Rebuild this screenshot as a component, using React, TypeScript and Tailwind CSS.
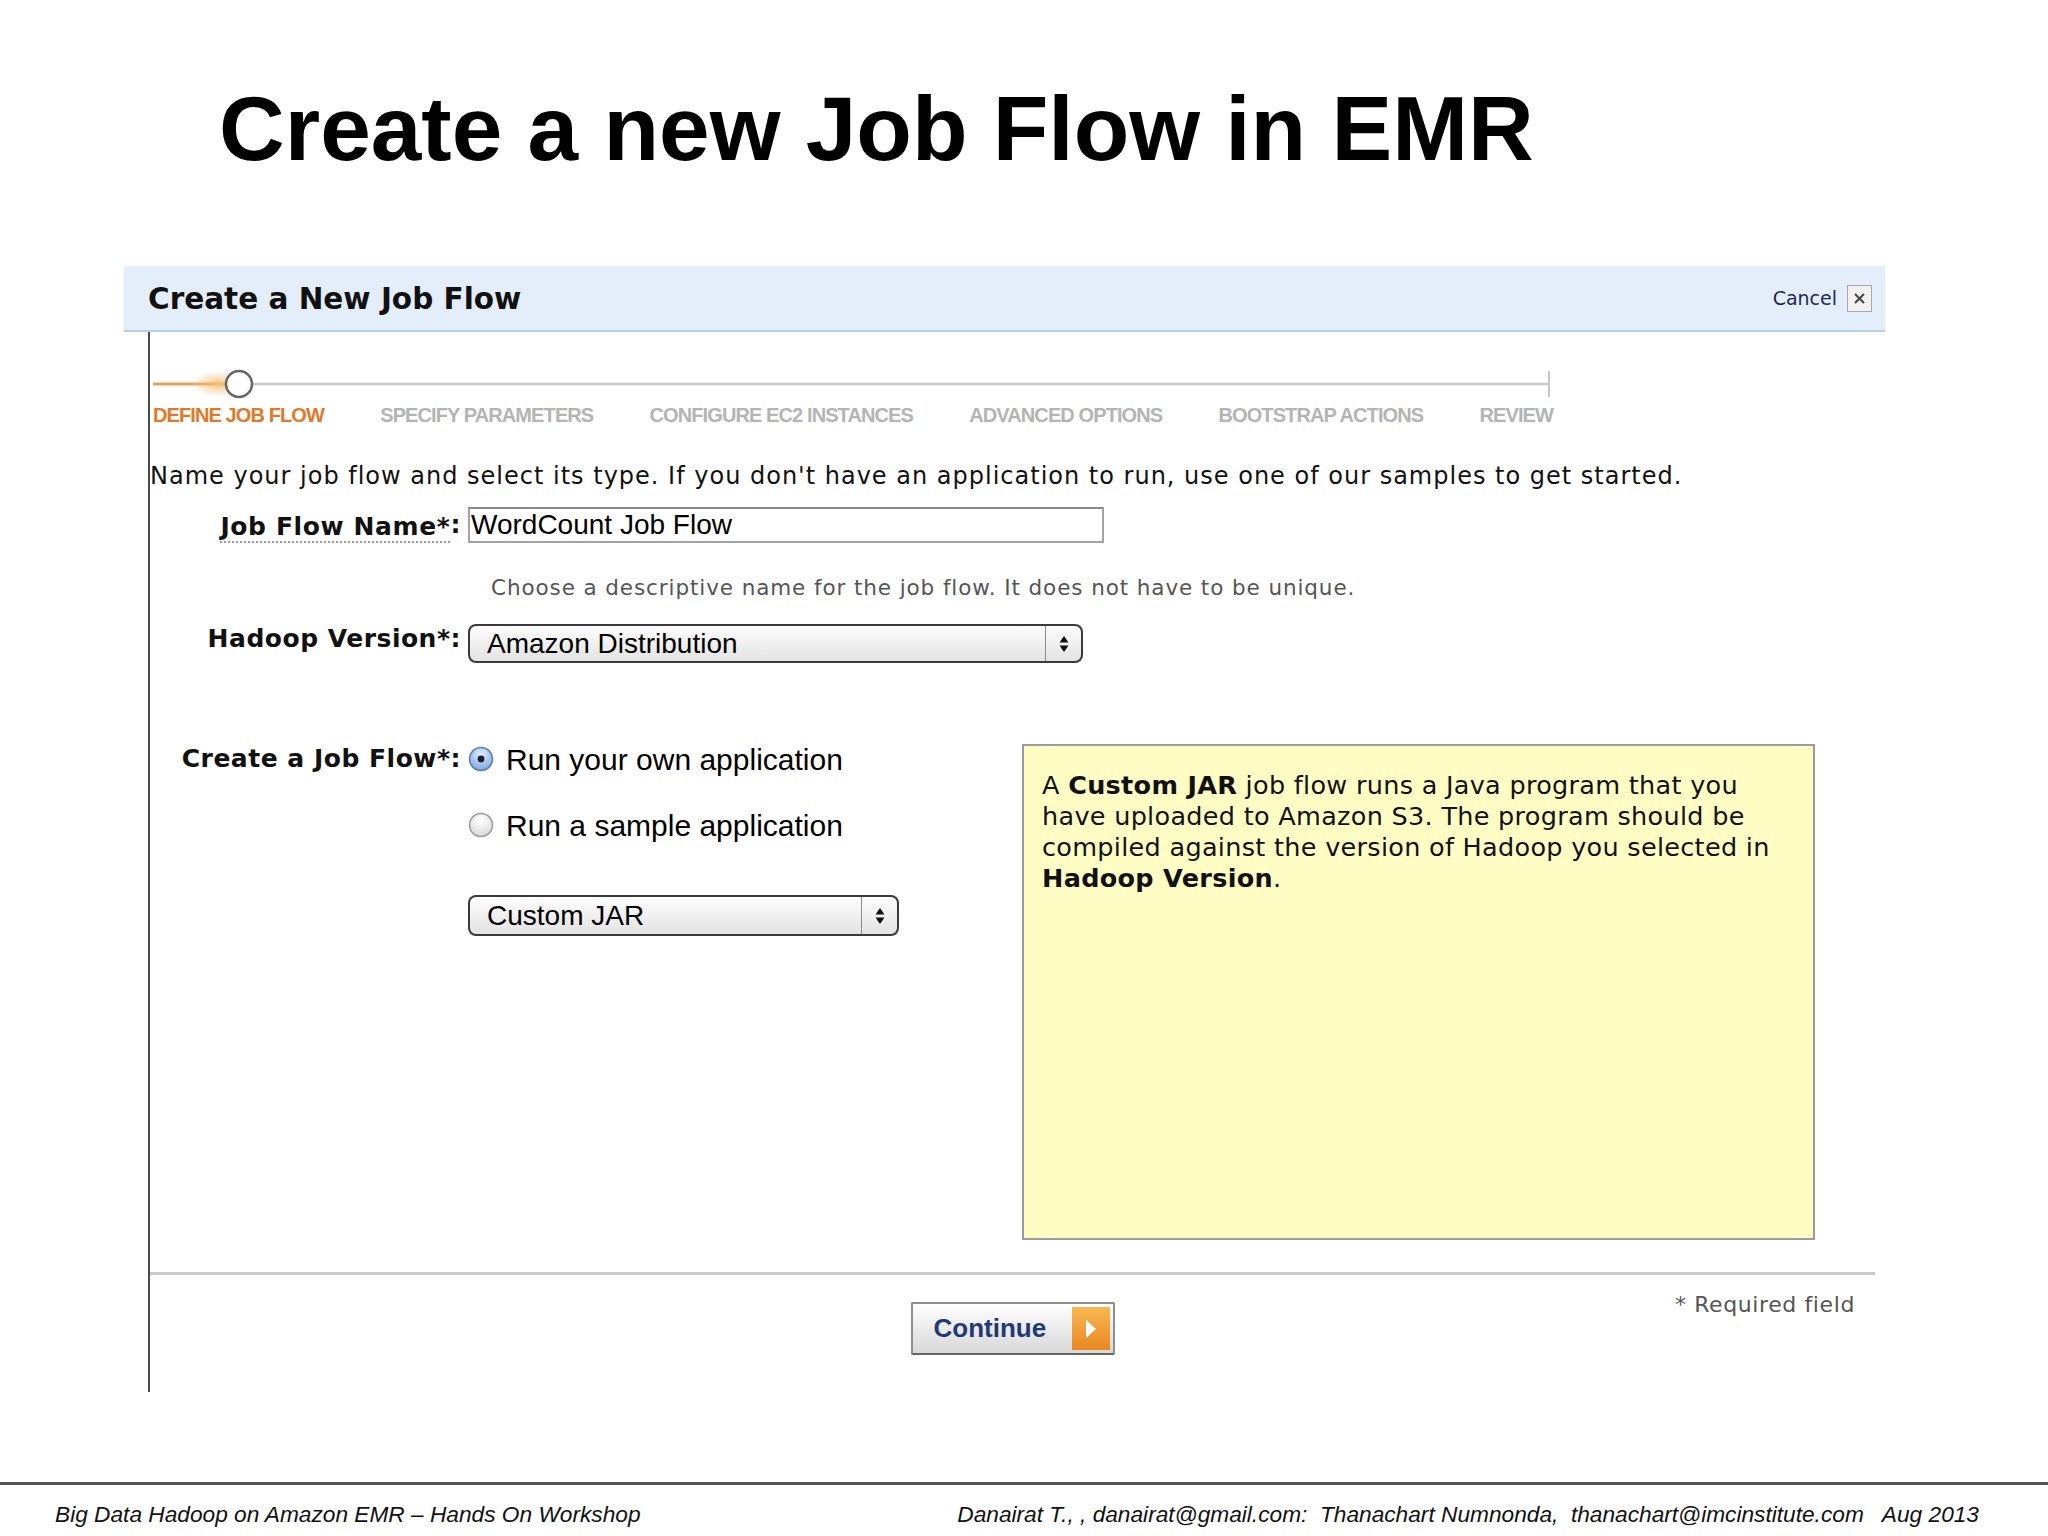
const ui = "font-['DejaVu_Sans',Verdana,sans-serif]";
const mac = "font-['Liberation_Sans',Arial,Helvetica,sans-serif]";

function Arrows() {
  return (
    <svg width="10" height="20" viewBox="0 0 10 20">
      <polygon points="5,2 9.5,8.5 0.5,8.5" fill="#111" />
      <polygon points="0.5,11.5 9.5,11.5 5,18" fill="#111" />
    </svg>
  );
}

function Radio({ checked }: { checked: boolean }) {
  const id = checked ? "radioOn" : "radioOff";
  return (
    <svg width="26" height="26" viewBox="0 0 26 26" className="shrink-0">
      <defs>
        <radialGradient id={id} cx="0.5" cy="0.3" r="0.7">
          <stop offset="0" stopColor={checked ? "#e3efff" : "#ffffff"} />
          <stop offset="1" stopColor={checked ? "#7ea6dd" : "#d9d9d9"} />
        </radialGradient>
      </defs>
      <circle
        cx="13"
        cy="13"
        r="11.5"
        fill={`url(#${id})`}
        stroke={checked ? "#5a7db3" : "#9c9c9c"}
        strokeWidth="1.5"
      />
      {checked && <circle cx="13" cy="13" r="3.4" fill="#1b1f33" />}
    </svg>
  );
}

function Steps() {
  const steps = [
    "SPECIFY PARAMETERS",
    "CONFIGURE EC2 INSTANCES",
    "ADVANCED OPTIONS",
    "BOOTSTRAP ACTIONS",
    "REVIEW",
  ];
  return (
    <div className="ml-[3px] w-[1400px]">
      <svg width="1400" height="32" viewBox="0 0 1400 32" className="block">
        <defs>
          <radialGradient id="glow" cx="0.5" cy="0.5" r="0.5">
            <stop offset="0" stopColor="#f5bf78" stopOpacity="0.9" />
            <stop offset="1" stopColor="#f5bf78" stopOpacity="0" />
          </radialGradient>
        </defs>
        <line x1="0" y1="17" x2="86" y2="17" stroke="#e7a35c" strokeWidth="3" />
        <ellipse cx="66" cy="17" rx="28" ry="13" fill="url(#glow)" />
        <line x1="98" y1="17" x2="1396" y2="17" stroke="#c8c8c8" strokeWidth="2.5" />
        <line x1="1396" y1="4" x2="1396" y2="30" stroke="#c8c8c8" strokeWidth="2" />
        <circle cx="86" cy="17" r="13" fill="#fff" stroke="#666" strokeWidth="2.5" />
      </svg>
      <div
        className={`mt-[4px] flex justify-between text-[20px] leading-[24px] font-bold tracking-[-0.045em] ${mac}`}
      >
        <span className="text-[#df7a2a]">DEFINE JOB FLOW</span>
        {steps.map((s) => (
          <span key={s} className="text-[#b4b4b4]">
            {s}
          </span>
        ))}
      </div>
    </div>
  );
}

export default function App() {
  return (
    <div className="w-[2048px] h-[1536px] bg-white overflow-hidden flex flex-col text-[#111]">
      <h1 className={`pt-[83px] pl-[219px] text-[91px] leading-none font-bold text-black ${mac}`}>
        Create a new Job Flow in EMR
      </h1>

      <div className="mt-[92px] ml-[124px] w-[1761px]">
        <div className="h-[66px] bg-[#e4eefb] border-b-2 border-[#b8cde9] flex items-center justify-between pl-[24px] pr-[13px]">
          <span className={`${ui} font-bold text-[29.5px] leading-none text-[#111] mt-[3px]`}>
            Create a New Job Flow
          </span>
          <div className="flex items-center gap-[10px]">
            <span className={`${ui} text-[19px] text-[#1b2a57]`}>Cancel</span>
            <span className="w-[25px] h-[27px] border border-[#a9a9a9] bg-[#f1f1f1] flex items-center justify-center">
              <svg width="11" height="11" viewBox="0 0 11 11">
                <path d="M1 1 L10 10 M10 1 L1 10" stroke="#444" strokeWidth="2" />
              </svg>
            </span>
          </div>
        </div>

        <div className="ml-[24px] w-[1727px] border-l-2 border-[#4a4a4a] pt-[35px] pb-[37px]">
          <Steps />

          <p className={`mt-[35px] ${ui} text-[24px] tracking-[1px] leading-[28px] whitespace-nowrap`}>
            Name your job flow and select its type. If you don't have an application to run, use one of our samples to get started.
          </p>

          <div className="mt-[17px] flex gap-[7px]">
            <div className={`w-[311px] shrink-0 h-[36px] flex items-center justify-end ${ui} font-bold text-[25px] tracking-[0.6px]`}>
              <span className="border-b-2 border-dotted border-[#9a9a9a] leading-[28px] mt-[6px]">Job Flow Name*</span>
              <span>:</span>
            </div>
            <div>
              <div className={`w-[636px] h-[36px] border-2 border-[#a3a3a3] border-t-[#8a8a8a] bg-white flex items-center pl-[1px] ${mac} text-[28px] text-black`}>
                WordCount Job Flow
              </div>
              <p className={`mt-[32px] pl-[23px] ${ui} text-[21.5px] tracking-[0.9px] leading-[26px] text-[#555] whitespace-nowrap`}>
                Choose a descriptive name for the job flow. It does not have to be unique.
              </p>
            </div>
          </div>

          <div className="mt-[23px] flex gap-[7px]">
            <div className={`w-[311px] shrink-0 h-[30px] flex items-center justify-end ${ui} font-bold text-[25px] tracking-[0.5px]`}>
              Hadoop Version*:
            </div>
            <div className="w-[615px] h-[39px] rounded-[8px] border-2 border-[#3a3a3a] bg-gradient-to-b from-[#fdfdfd] to-[#e3e3e3] flex items-stretch">
              <span className={`flex-1 flex items-center pl-[17px] ${mac} text-[28px] text-black`}>
                Amazon Distribution
              </span>
              <span className="w-[36px] border-l border-[#8c8c8c] flex items-center justify-center">
                <Arrows />
              </span>
            </div>
          </div>

          <div className="mt-[81px] flex gap-[7px]">
            <div className={`w-[311px] shrink-0 h-[30px] flex items-center justify-end ${ui} font-bold text-[25px] tracking-[0.5px]`}>
              Create a Job Flow*:
            </div>
            <div className="w-[547px] shrink-0">
              <label className={`h-[30px] flex items-center gap-[12px] ${mac} text-[30px] text-black`}>
                <Radio checked />
                Run your own application
              </label>
              <label className={`mt-[36px] h-[30px] flex items-center gap-[12px] ${mac} text-[30px] text-black`}>
                <Radio checked={false} />
                Run a sample application
              </label>
              <div className="mt-[55px] w-[431px] h-[41px] rounded-[8px] border-2 border-[#3a3a3a] bg-gradient-to-b from-[#fdfdfd] to-[#e3e3e3] flex items-stretch">
                <span className={`flex-1 flex items-center pl-[17px] ${mac} text-[28px] text-black`}>
                  Custom JAR
                </span>
                <span className="w-[36px] border-l border-[#8c8c8c] flex items-center justify-center">
                  <Arrows />
                </span>
              </div>
            </div>
            <div className={`w-[793px] h-[496px] shrink-0 bg-[#fffdc3] border-2 border-[#9a9a9a] pt-[24px] pl-[18px] ${ui} text-[25.5px] tracking-[0.3px] leading-[31px] text-[#111] whitespace-nowrap`}>
              A <b>Custom JAR</b> job flow runs a Java program that you
              <br />
              have uploaded to Amazon S3. The program should be
              <br />
              compiled against the version of Hadoop you selected in
              <br />
              <b>Hadoop Version</b>.
            </div>
          </div>

          <div className="mt-[32px] h-[3px] bg-[#c9c9c9]" />

          <div className="mt-[27px] grid grid-cols-[1fr_auto_1fr]">
            <div />
            <button className="w-[204px] h-[53px] border-2 border-[#8e8e8e] border-b-[#666] rounded-[2px] bg-gradient-to-b from-white to-[#d8d8d8] flex items-center justify-between pl-[21px] pr-[3px]">
              <span className={`${mac} font-bold text-[26px] text-[#1e3a77]`}>Continue</span>
              <span className="w-[38px] h-[43px] bg-gradient-to-b from-[#f7b851] to-[#ea8720] flex items-center justify-center">
                <svg width="14" height="22" viewBox="0 0 14 22">
                  <polygon points="2,2 12,11 2,20" fill="#fff" />
                </svg>
              </span>
            </button>
            <div className={`justify-self-end pr-[20px] -mt-[10px] ${ui} text-[22px] tracking-[0.6px] leading-[26px] text-[#555]`}>
              * Required field
            </div>
          </div>
        </div>
      </div>

      <div className="mt-[90px] h-[3px] bg-[#555]" />
      <div className={`mt-[15px] flex justify-between pl-[55px] pr-[69px] ${mac} italic text-[22.7px] leading-[28px] text-[#111] whitespace-pre`}>
        <span>Big Data Hadoop on Amazon EMR – Hands On Workshop</span>
        <span>Danairat T., , danairat@gmail.com:  Thanachart Numnonda,  thanachart@imcinstitute.com   Aug 2013</span>
      </div>
    </div>
  );
}
